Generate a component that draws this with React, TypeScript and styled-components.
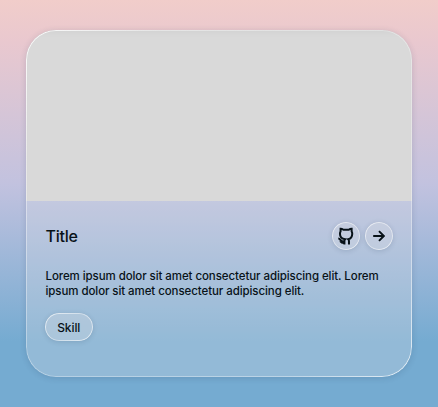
import React from "react";
import styled, { createGlobalStyle, css } from "styled-components";

const GlobalStyle = createGlobalStyle`
  * { box-sizing: border-box; }
  body { margin: 0; overflow: hidden; }
`;

const glass = css`
  position: relative;
  &::after {
    content: "";
    position: absolute;
    inset: 0;
    border-radius: inherit;
    padding: 1px;
    pointer-events: none;
    background: linear-gradient(135deg, rgba(255, 255, 255, 0.9), rgba(255, 255, 255, 0.42) 18%, rgba(255, 255, 255, 0.32) 50%, rgba(255, 255, 255, 0.38) 82%, rgba(255, 255, 255, 0.75));
    mask: linear-gradient(#000 0 0) content-box exclude, linear-gradient(#000 0 0);
  }
`;

const Page = styled.main`
  width: 438px;
  height: 407px;
  padding: 30px 26px;
  background: linear-gradient(180deg, #f1cdca 0, #e9c8cf 42px, #c2c2df 184px, #75abd1 342px, #75abd1 100%);
  font-family: "Inter", sans-serif;
  color: #081218;
`;

const Card = styled.article`
  ${glass}
  height: 347px;
  border-radius: 30px;
  overflow: hidden;
  background: rgba(217, 222, 228, 0.3);
  box-shadow: 0 1px 6px rgba(30, 50, 80, 0.16);
`;

const Cover = styled.div`
  height: 171px;
  background: #d9d9d9;
  box-shadow: inset 0 5px 10px -5px rgba(0, 0, 0, 0.06);
`;

const Body = styled.div`
  padding: 21px 19.5px 0 19px;
`;

const Header = styled.header`
  display: flex;
  align-items: center;
  justify-content: space-between;
  height: 28px;
`;

const Title = styled.h2`
  margin: 0 0 1px 0.5px;
  font-size: 16px;
  font-weight: 500;
  line-height: 20px;
  letter-spacing: -0.25px;
`;

const Actions = styled.div`
  display: flex;
  gap: 5px;
`;

const chip = css`
  ${glass}
  display: flex;
  align-items: center;
  justify-content: center;
  height: 28px;
  padding: 0;
  border: 0;
  border-radius: 14px;
  color: inherit;
  background: rgba(217, 220, 226, 0.32);
  box-shadow: 0 1px 5px rgba(30, 50, 80, 0.16);
  &::after {
    background: linear-gradient(135deg, rgba(255, 255, 255, 0.7), rgba(255, 255, 255, 0.42) 50%, rgba(255, 255, 255, 0.7));
  }
`;

const IconButton = styled.button`
  ${chip}
  width: 28px;
`;

const Description = styled.p`
  width: 340px;
  margin: 19px 0 14px 0.5px;
  font-size: 11.5px;
  font-weight: 550;
  line-height: 15px;
  letter-spacing: -0.08px;
  white-space: nowrap;
`;

const Skill = styled.span`
  ${chip}
  width: 47.5px;
  font-size: 12px;
  font-weight: 550;
  letter-spacing: -0.1px;
`;

const GithubIcon = () => (
  <svg width="18" height="18" viewBox="0 0 17 17" fill="none" stroke="currentColor" strokeWidth="1.9">
    <path d="M7 16.6V13.3C7 12.4 7.2 12 7.6 11.6C4.4 11.1 2.8 9.5 2.8 6.3C2.8 5.3 3 4.6 3.4 3.9V1.7C4.5 1.7 5.3 2.1 6.1 2.6H11.1C11.8 2.1 12.6 1.7 13.8 1.7V3.9C14.2 4.6 14.4 5.3 14.4 6.3C14.4 9.5 12.6 11.1 10.6 11.6C11.1 12 11.3 12.4 11.3 13.3V16.6" />
    <path d="M1.2 10.9C2.4 10.9 2.9 11.7 3.5 12.5C4.3 13.5 5.4 13.9 7 13.6M3 13.3C3.9 14.6 5.2 15.3 6.8 15.2" />
  </svg>
);

const ArrowIcon = () => (
  <svg width="12" height="12" viewBox="0 0 12 12" fill="none" stroke="currentColor" strokeWidth="1.9">
    <path d="M0.2 6H10.8M6 1.1L10.8 6L6 10.9" />
  </svg>
);

export default function App() {
  return (
    <Page>
      <GlobalStyle />
      <Card>
        <Cover />
        <Body>
          <Header>
            <Title>Title</Title>
            <Actions>
              <IconButton aria-label="GitHub">
                <GithubIcon />
              </IconButton>
              <IconButton aria-label="Open">
                <ArrowIcon />
              </IconButton>
            </Actions>
          </Header>
          <Description>
            Lorem ipsum dolor sit amet consectetur adipiscing elit. Lorem
            <br />
            ipsum dolor sit amet consectetur adipiscing elit.
          </Description>
          <Skill>Skill</Skill>
        </Body>
      </Card>
    </Page>
  );
}
